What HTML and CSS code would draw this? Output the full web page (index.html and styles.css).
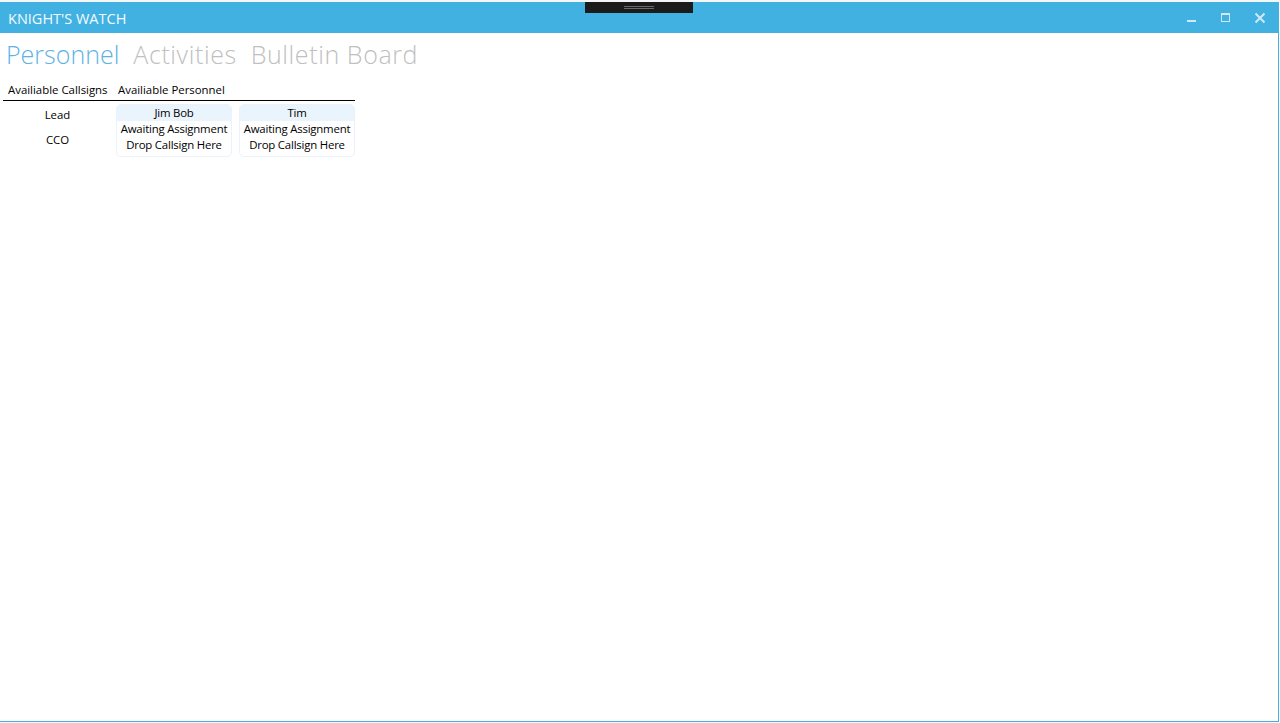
FILE: index.html
```html
<!DOCTYPE html>
<html>
<head>
<meta charset="utf-8">
<link rel="stylesheet" href="styles.css">
</head>
<body>
<div class="window">
  <div class="titlebar">
    <div class="title">KNIGHT'S WATCH</div>
    <div class="handle"><span class="grip"></span></div>
    <div class="controls">
      <svg class="ctl" width="12" height="12" viewBox="0 0 12 12"><rect x="1" y="8" width="9" height="2" fill="#cfe9f7"/></svg>
      <svg class="ctl" width="12" height="12" viewBox="0 0 12 12"><rect x="1.5" y="1.5" width="8" height="8" fill="none" stroke="#cfe9f7" stroke-width="1"/><rect x="1" y="1" width="9" height="2" fill="#cfe9f7"/></svg>
      <svg class="ctl" width="12" height="12" viewBox="0 0 12 12"><path d="M1.5 1.5 L10.5 10.5 M10.5 1.5 L1.5 10.5" stroke="#cfe9f7" stroke-width="2"/></svg>
    </div>
  </div>
  <div class="content">
    <div class="tabs">
      <span class="tab active">Personnel</span>
      <span class="tab">Activities</span>
      <span class="tab">Bulletin Board</span>
    </div>
    <div class="grid">
      <div class="head">
        <div class="h-call">Availiable Callsigns</div>
        <div class="h-pers">Availiable Personnel</div>
      </div>
      <div class="rows">
        <div class="callsigns">
          <div class="cs">Lead</div>
          <div class="cs">CCO</div>
        </div>
        <div class="cards">
          <div class="card">
            <div class="name">Jim Bob</div>
            <div class="line">Awaiting Assignment</div>
            <div class="line">Drop Callsign Here</div>
          </div>
          <div class="card">
            <div class="name">Tim</div>
            <div class="line">Awaiting Assignment</div>
            <div class="line">Drop Callsign Here</div>
          </div>
        </div>
      </div>
    </div>
  </div>
</div>
</body>
</html>
```
FILE: styles.css
```css
html, body {
  margin: 0;
  padding: 0;
  background: #f4f6f8;
  height: 723px;
  overflow: hidden;
}
body {
  padding-top: 2px;
  font-family: "Segoe UI", "Open Sans", "Noto Sans", sans-serif;
}
.window {
  width: 1279px;
  height: 720px;
  box-sizing: border-box;
  border: 1px solid #41b1e1;
  border-top: none;
  border-left: none;
  background: #ffffff;
  display: flex;
  flex-direction: column;
}
.titlebar {
  height: 31px;
  background: #41b1e1;
  position: relative;
  display: flex;
  align-items: center;
}
.title {
  color: #f4faff;
  font-size: 14.5px;
  padding-left: 8px;
  padding-top: 1px;
}
.handle {
  position: absolute;
  left: 585px;
  top: 0;
  width: 108px;
  height: 11px;
  background: #1b1b1b;
  display: flex;
  justify-content: center;
  align-items: center;
}
.grip {
  width: 30px;
  height: 3px;
  border-top: 1px solid #6a6a6a;
  border-bottom: 1px solid #6a6a6a;
  box-sizing: border-box;
  margin-top: -1px;
}
.controls {
  margin-left: auto;
  display: flex;
  gap: 22px;
  padding-right: 12px;
  align-items: center;
}
.ctl { display: block; }
.content {
  flex: 1;
  padding-left: 3px;
}
.tabs {
  display: flex;
  gap: 14px;
  padding-left: 3px;
  height: 42px;
  padding-bottom: 3px;
  align-items: center;
  font-weight: 300;
  font-size: 25px;
}
.tab { color: #c0c0c0; letter-spacing: 0.6px; }
.tab.active { color: #5db3e4; letter-spacing: 0; }
.grid {
  width: 352px;
  font-size: 11.4px;
  color: #000;
  white-space: nowrap;
}
.head {
  display: flex;
  height: 22px;
  align-items: center;
  border-bottom: 1px solid #000;
}
.h-call { width: 110px; padding-left: 5px; box-sizing: border-box; }
.h-pers { padding-left: 5px; }
.rows {
  display: flex;
  padding-top: 3px;
}
.callsigns {
  width: 110px;
  display: flex;
  flex-direction: column;
  align-items: center;
  padding-top: 3px;
}
.cs { height: 25px; line-height: 16px; }
.cards {
  display: flex;
  gap: 7px;
  padding-left: 4px;
}
.card {
  width: 114px;
  border: 1px solid #eaf3fb;
  border-radius: 5px;
  text-align: center;
  line-height: 16px;
  overflow: hidden;
  letter-spacing: -0.2px;
}
.name { background: #eaf4fd; }
```
